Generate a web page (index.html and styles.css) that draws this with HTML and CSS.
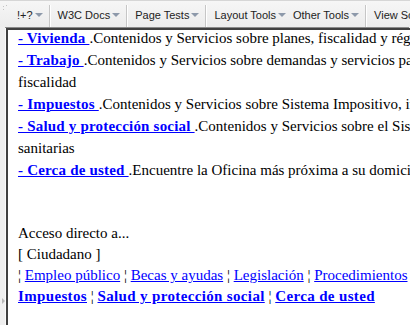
FILE: index.html
```html
<!DOCTYPE html>
<html lang="es">
<head>
    <meta charset="UTF-8">
    <title>Ciudadano</title>
    <link rel="stylesheet" href="styles.css">
</head>
<body>
    <!-- Web developer toolbar -->
    <div class="toolbar">
        <span class="gripper"></span>
        <span class="tb-item">!+?<i class="arrow"></i></span>
        <span class="tb-sep"></span>
        <span class="tb-item">W3C Docs<i class="arrow"></i></span>
        <span class="tb-sep"></span>
        <span class="tb-item">Page Tests<i class="arrow"></i></span>
        <span class="tb-sep"></span>
        <span class="tb-item">Layout Tools<i class="arrow"></i></span>
        <span class="tb-item tb-tight">Other Tools<i class="arrow"></i></span>
        <span class="tb-sep"></span>
        <span class="tb-item">View Source</span>
    </div>

    <div class="frame">
        <div class="sidebar"><span class="grip"></span></div>

        <div class="content">
            <div class="temas">
                <p><a href="#">- Vivienda&nbsp;</a>.Contenidos y Servicios sobre planes, fiscalidad y régimen de la vivienda</p>
                <p><a href="#">- Trabajo&nbsp;</a>.Contenidos y Servicios sobre demandas y servicios para el empleo y su<br>fiscalidad</p>
                <p><a href="#">- Impuestos&nbsp;</a>.Contenidos y Servicios sobre Sistema Impositivo, impuestos y tasas</p>
                <p><a href="#">- Salud y protección social&nbsp;</a>.Contenidos y Servicios sobre el Sistema de Seguridad Social y prestaciones<br>sanitarias</p>
                <p><a href="#">- Cerca de usted&nbsp;</a>.Encuentre la Oficina más próxima a su domicilio</p>
            </div>

            <div class="acceso">
                <p>Acceso directo a...</p>
                <p>[ Ciudadano ]</p>
                <p class="enlaces">¦ <a href="#">Empleo público</a> ¦ <a href="#">Becas y ayudas</a> ¦ <a href="#">Legislación</a> ¦ <a href="#">Procedimientos</a></p>
                <p class="enlaces destacados"><a href="#">Impuestos</a> ¦ <a href="#">Salud y protección social</a> ¦ <a href="#">Cerca de usted</a></p>
            </div>
        </div>
    </div>
</body>
</html>
```

FILE: styles.css
```css
/* General */
html, body {
    margin: 0;
    padding: 0;
    height: 100%;
    overflow: hidden;
}

body {
    background: #efefef;
    font-family: "Liberation Serif", "Times New Roman", serif;
}

/* Toolbar */
.toolbar {
    display: flex;
    align-items: center;
    height: 27px;
    border-top: 1px solid #d6d6d6;
    box-sizing: border-box;
    background: linear-gradient(#f6f6f6, #ececec);
    font-family: "Liberation Sans", Tahoma, sans-serif;
    font-size: 11px;
    color: #222;
    white-space: nowrap;
    overflow: hidden;
}

.gripper {
    flex-shrink: 0;
    width: 10px;
    height: 26px;
    background:
        radial-gradient(circle, #c4c4c4 0.8px, transparent 1px) 2px 4px / 3px 3px no-repeat,
        radial-gradient(circle, #c4c4c4 0.8px, transparent 1px) 5px 3px / 3px 3px no-repeat,
        radial-gradient(circle, #c4c4c4 0.8px, transparent 1px) 2px 7px / 3px 3px no-repeat;
}

.tb-item {
    display: flex;
    align-items: center;
    gap: 2px;
    padding: 1px 6px 0 7px;
}

.tb-tight {
    padding-left: 1px;
}

.arrow {
    width: 0;
    height: 0;
    margin-top: 1px;
    border-left: 4px solid transparent;
    border-right: 4px solid transparent;
    border-top: 4px solid #8d99aa;
}

.tb-sep {
    flex-shrink: 0;
    align-self: stretch;
    margin: 4px 0 0;
    width: 0;
    border-left: 1px solid #c6c6c6;
    border-right: 1px solid #fff;
}

/* Frame */
.frame {
    display: flex;
    height: calc(100% - 28px);
    margin-top: 1px;
}

.sidebar {
    flex-shrink: 0;
    position: relative;
    width: 5px;
    border-right: 1px solid #fafafa;
}

.grip {
    position: absolute;
    left: 2px;
    top: 270px;
    border-top: 3px solid transparent;
    border-bottom: 3px solid transparent;
    border-left: 3px solid #b8b8b8;
}

.content {
    flex: 1;
    min-width: 0;
    background: #fff;
    border-top: 2px solid #404040;
    border-left: 2px solid #404040;
    box-shadow: -1px -1px 0 #8a8a8a;
    padding-left: 10px;
    font-size: 15px;
    white-space: nowrap;
}

.content p {
    margin: 0;
}

a {
    color: #0000ff;
}

/* Temas */
.temas {
    margin-top: -3px;
    line-height: 22px;
}

.temas a {
    font-weight: bold;
    letter-spacing: 0.2px;
}

/* Acceso directo */
.acceso {
    margin-top: 42px;
    line-height: 21px;
}

.destacados a {
    font-weight: bold;
    letter-spacing: 0.35px;
}
```
